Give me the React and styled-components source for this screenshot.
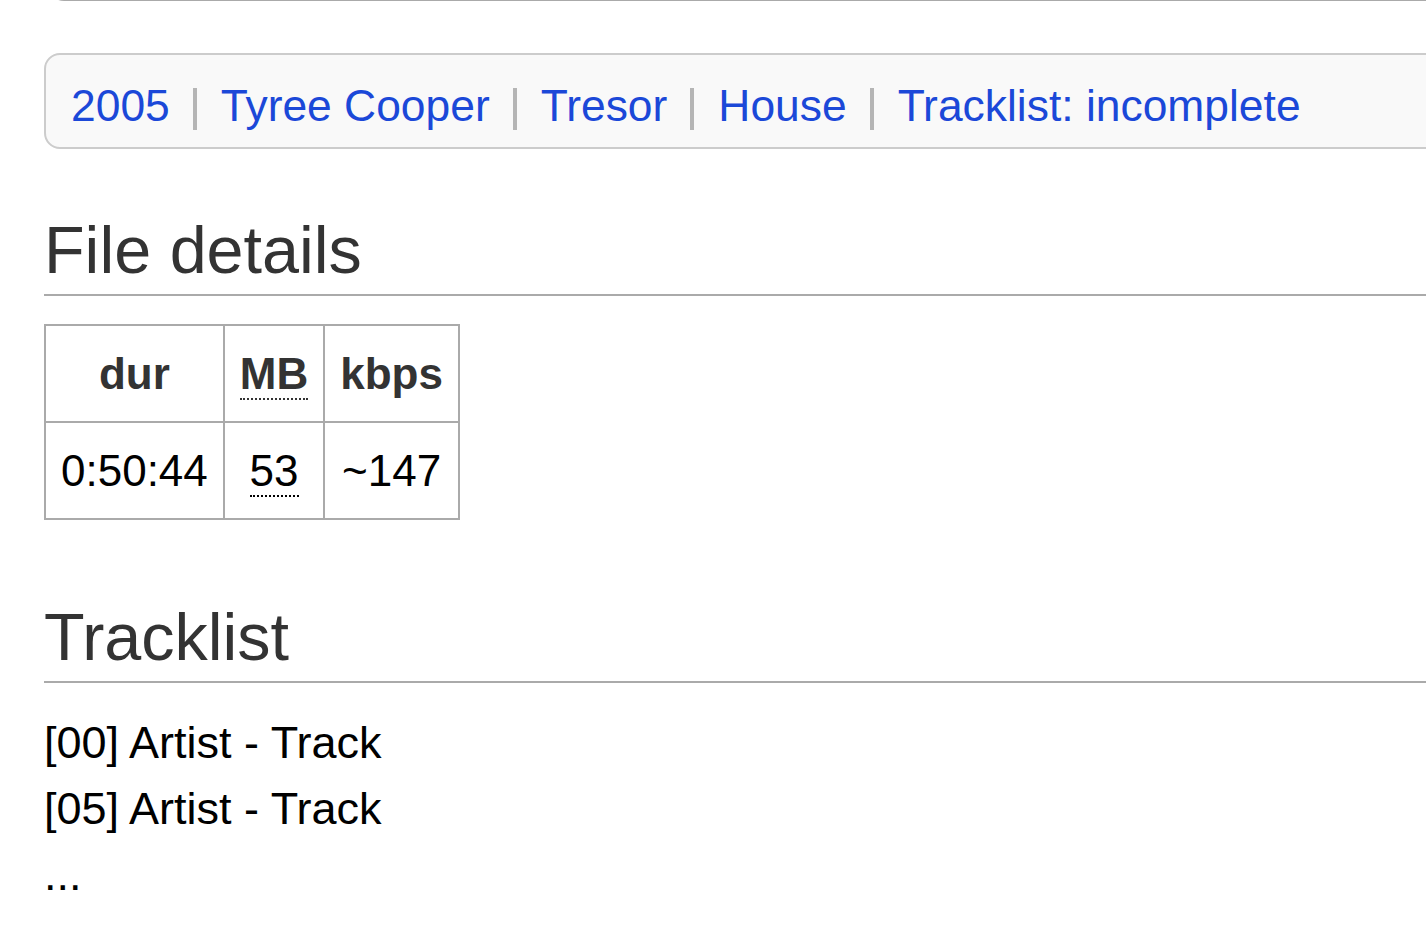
import React from "react";
import styled, { createGlobalStyle } from "styled-components";

const Global = createGlobalStyle`
  html, body { margin: 0; padding: 0; background: #fff; }
  body {
    overflow: hidden;
    font-family: "Liberation Sans", Arial, Helvetica, sans-serif;
    color: #000;
  }
`;

const Page = styled.div`
  width: 1560px;
  padding-left: 44px;
  box-sizing: border-box;
`;

const TopRule = styled.div`
  margin-left: 4px;
  margin-top: -31px;
  height: 32px;
  box-sizing: border-box;
  border: 2px solid #aaa;
  border-radius: 20px;
`;

const CatBox = styled.div`
  margin-top: 52px;
  height: 96px;
  box-sizing: border-box;
  border: 2px solid #ccc;
  border-radius: 16px;
  background: #f9f9f9;
  padding: 16px 25px 6px;
`;

const CatRow = styled.div`
  display: flex;
  align-items: flex-start;
  font-size: 44.4px;
  line-height: 70px;
`;

const CatLink = styled.a`
  color: #1b48d8;
  text-decoration: none;
  white-space: nowrap;
`;

const Sep = styled.span`
  width: 4px;
  height: 42px;
  margin: 17px 24px 0 23px;
  background: #b5b5b5;
  flex: none;
`;

const Heading = styled.h2`
  margin: ${(p) => p.$top}px 0 ${(p) => p.$bottom}px;
  font-size: 66.5px;
  font-weight: normal;
  line-height: 86px;
  color: #333;
  padding-bottom: 1px;
  border-bottom: 2px solid #aaa;
`;

const Table = styled.table`
  border-collapse: collapse;
  font-size: 44px;
`;

const Th = styled.th`
  border: 2px solid #aaa;
  height: 95px;
  padding: 0 15px;
  color: #333;
  font-weight: bold;
  text-align: center;
  vertical-align: middle;
  white-space: nowrap;
`;

const Td = styled.td`
  border: 2px solid #aaa;
  height: 95px;
  padding: 0 15px;
  color: #000;
  text-align: center;
  vertical-align: middle;
  white-space: nowrap;
`;

const Abbr = styled.abbr`
  text-decoration: none;
  border-bottom: 2px dotted currentColor;
`;

const TrackList = styled.div`
  font-size: 45px;
  line-height: 66px;
  color: #000;
`;

const TrackLine = styled.div``;

const cats = ["2005", "Tyree Cooper", "Tresor", "House", "Tracklist: incomplete"];

export default function App() {
  return (
    <>
      <Global />
      <Page>
        <TopRule />
        <CatBox>
          <CatRow>
            {cats.map((c, i) => (
              <React.Fragment key={c}>
                {i > 0 && <Sep />}
                <CatLink href="#">{c}</CatLink>
              </React.Fragment>
            ))}
          </CatRow>
        </CatBox>

        <Heading $top={58} $bottom={28}>File details</Heading>
        <Table>
          <thead>
            <tr>
              <Th>dur</Th>
              <Th>
                <Abbr title="megabytes">MB</Abbr>
              </Th>
              <Th>kbps</Th>
            </tr>
          </thead>
          <tbody>
            <tr>
              <Td>0:50:44</Td>
              <Td>
                <Abbr title="53 MB">53</Abbr>
              </Td>
              <Td>~147</Td>
            </tr>
          </tbody>
        </Table>

        <Heading $top={74} $bottom={27}>Tracklist</Heading>
        <TrackList>
          <TrackLine>[00] Artist - Track</TrackLine>
          <TrackLine>[05] Artist - Track</TrackLine>
          <TrackLine>...</TrackLine>
        </TrackList>
      </Page>
    </>
  );
}
